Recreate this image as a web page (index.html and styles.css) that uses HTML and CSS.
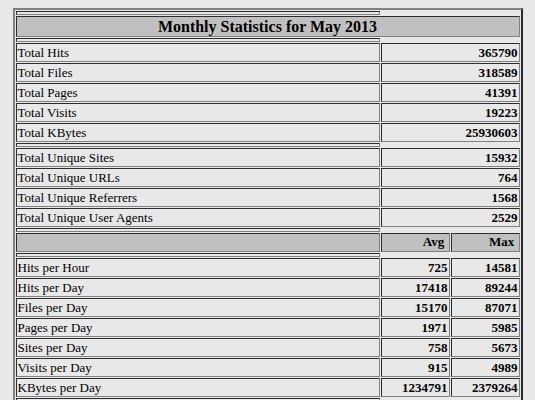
FILE: index.html
```
<!DOCTYPE html>
<html>
<head>
<meta charset="utf-8">
<title>Monthly Statistics for May 2013</title>
<link rel="stylesheet" href="styles.css">
</head>
<body>
<div class="center">
<table class="stats">
<tr><th class="spacer"></th></tr>
<tr><th colspan="3" class="title">Monthly Statistics for May 2013</th></tr>
<tr><th class="spacer"></th></tr>
<tr><td class="label">Total Hits</td><td colspan="2" class="num">365790</td></tr>
<tr><td class="label">Total Files</td><td colspan="2" class="num">318589</td></tr>
<tr><td class="label">Total Pages</td><td colspan="2" class="num">41391</td></tr>
<tr><td class="label">Total Visits</td><td colspan="2" class="num">19223</td></tr>
<tr><td class="label">Total KBytes</td><td colspan="2" class="num">25930603</td></tr>
<tr><th class="spacer"></th></tr>
<tr><td class="label">Total Unique Sites</td><td colspan="2" class="num">15932</td></tr>
<tr><td class="label">Total Unique URLs</td><td colspan="2" class="num">764</td></tr>
<tr><td class="label">Total Unique Referrers</td><td colspan="2" class="num">1568</td></tr>
<tr><td class="label">Total Unique User Agents</td><td colspan="2" class="num">2529</td></tr>
<tr><th class="spacer"></th></tr>
<tr><th class="label hdr"><span class="hidden">.</span></th><th class="col hdr right">Avg&nbsp;</th><th class="col hdr right">Max&nbsp;</th></tr>
<tr><th class="spacer"></th></tr>
<tr><td class="label">Hits per Hour</td><td class="num col">725</td><td class="num col">14581</td></tr>
<tr><td class="label">Hits per Day</td><td class="num col">17418</td><td class="num col">89244</td></tr>
<tr><td class="label">Files per Day</td><td class="num col">15170</td><td class="num col">87071</td></tr>
<tr><td class="label">Pages per Day</td><td class="num col">1971</td><td class="num col">5985</td></tr>
<tr><td class="label">Sites per Day</td><td class="num col">758</td><td class="num col">5673</td></tr>
<tr><td class="label">Visits per Day</td><td class="num col">915</td><td class="num col">4989</td></tr>
<tr><td class="label">KBytes per Day</td><td class="num col">1234791</td><td class="num col">2379264</td></tr>
<tr><th class="spacer"></th></tr>
</table>
</div>
</body>
</html>
```
FILE: styles.css
```
body {
  margin: 8px;
  background: #e8e8e8;
  color: #000;
  font-family: "Liberation Serif", "Times New Roman", serif;
  font-size: 16px;
}
.center {
  display: flex;
  justify-content: center;
  align-items: flex-start;
}
.stats {
  width: 510px;
  border: 2px outset grey;
  border-spacing: 1px;
  border-collapse: separate;
}
.stats th, .stats td {
  border: 1px inset grey;
  padding: 1px;
}
.stats th.spacer {
  box-sizing: border-box;
  height: 4px;
  padding: 0;
  line-height: 0;
  font-size: 0;
}
.title {
  background: #c0c0c0;
  font-size: 16px;
  line-height: 17px;
  font-weight: bold;
  text-align: center;
}
.label {
  width: 360px;
  font-size: 13px;
  line-height: 15px;
  text-align: left;
  font-weight: normal;
}
.num {
  font-size: 13px;
  line-height: 15px;
  font-weight: bold;
  text-align: right;
}
.col {
  width: 65px;
}
.stats .hdr {
  background: #c0c0c0;
  font-size: 13px;
  line-height: 13px;
  padding: 1px 1px 3px;
  font-weight: bold;
  vertical-align: top;
}
.right {
  text-align: right;
}
.hidden {
  color: #c0c0c0;
}
```
